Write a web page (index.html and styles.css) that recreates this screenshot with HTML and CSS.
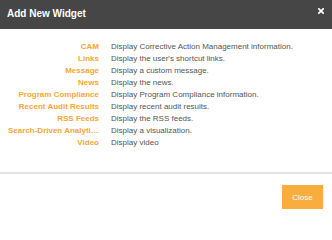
FILE: index.html
```html
<!DOCTYPE html>
<html>
<head>
<meta charset="utf-8">
<link rel="stylesheet" href="styles.css">
</head>
<body>
<div class="dialog">
  <div class="header">
    <span class="title">Add New Widget</span>
    <svg class="x" width="6" height="6" viewBox="0 0 6 6"><path d="M0.8 0.8L5.2 5.2M5.2 0.8L0.8 5.2" stroke="#fff" stroke-width="1.7" stroke-linecap="square"/></svg>
  </div>
  <div class="list">
    <div class="name">CAM</div><div class="desc">Display Corrective Action Management information.</div>
    <div class="name">Links</div><div class="desc">Display the user's shortcut links.</div>
    <div class="name">Message</div><div class="desc">Display a custom message.</div>
    <div class="name">News</div><div class="desc">Display the news.</div>
    <div class="name">Program Compliance</div><div class="desc">Display Program Compliance information.</div>
    <div class="name">Recent Audit Results</div><div class="desc">Display recent audit results.</div>
    <div class="name">RSS Feeds</div><div class="desc">Display the RSS feeds.</div>
    <div class="name">Search-Driven Analytics</div><div class="desc">Display a visualization.</div>
    <div class="name">Video</div><div class="desc">Display video</div>
  </div>
  <div class="footer">
    <button class="close">Close</button>
  </div>
</div>
</body>
</html>
```
FILE: styles.css
```css
html, body {
  margin: 0;
  padding: 0;
  background: #fff;
}
.dialog {
  width: 332px;
  height: 217px;
  font-family: "Liberation Sans", Arial, sans-serif;
  display: flex;
  flex-direction: column;
}
.header {
  height: 29px;
  background: #464646;
  display: flex;
  align-items: center;
  justify-content: space-between;
  padding: 0 8px 1px 7px;
  box-sizing: border-box;
}
.title {
  color: #fff;
  font-weight: bold;
  font-size: 10px;
  line-height: 12px;
}
.x {
  display: block;
  margin-bottom: 7px;
}
.list {
  display: grid;
  grid-template-columns: 91px 1fr;
  column-gap: 12px;
  padding: 12px 0 0 8px;
  font-size: 8px;
  line-height: 12px;
}
.name {
  color: #f7a638;
  font-weight: bold;
  text-align: right;
  white-space: nowrap;
  overflow: hidden;
  text-overflow: ellipsis;
}
.desc {
  color: #555;
  white-space: nowrap;
}
.footer {
  margin-top: 23px;
  border-top: 2px solid #e2e2e2;
  display: flex;
  justify-content: flex-end;
  padding: 11px 9px 0 0;
}
.close {
  width: 41px;
  height: 24px;
  background: #f9ad3f;
  border: none;
  border-radius: 0;
  color: #fff;
  font-family: "Liberation Sans", Arial, sans-serif;
  font-size: 8px;
  padding: 0;
}
```
